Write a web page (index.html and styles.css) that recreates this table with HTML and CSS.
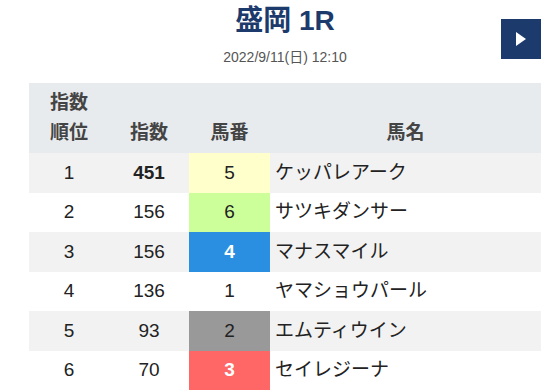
FILE: index.html
```html
<!DOCTYPE html>
<html lang="ja">
<head>
<meta charset="utf-8">
<link rel="stylesheet" href="styles.css">
</head>
<body>
<div class="page">
  <header class="race-head">
    <div class="spacer"></div>
    <div class="titles">
      <h1 class="race-title">盛岡 1R</h1>
      <div class="race-date">2022/9/11(日) 12:10</div>
    </div>
    <a class="next-btn" href="#" aria-label="次へ">
      <svg width="12" height="16" viewBox="0 0 12 16"><polygon points="1,1 11,8 1,15" fill="#fff"/></svg>
    </a>
  </header>
  <table class="idx-table">
    <thead>
      <tr>
        <th class="c-rank">指数<br>順位</th>
        <th class="c-idx">指数</th>
        <th class="c-num">馬番</th>
        <th class="c-name">馬名</th>
      </tr>
    </thead>
    <tbody>
      <tr><td>1</td><td class="top">451</td><td class="waku1">5</td><td class="name">ケッパレアーク</td></tr>
      <tr><td>2</td><td>156</td><td class="waku2">6</td><td class="name">サツキダンサー</td></tr>
      <tr><td>3</td><td>156</td><td class="waku3">4</td><td class="name">マナスマイル</td></tr>
      <tr><td>4</td><td>136</td><td>1</td><td class="name">ヤマショウパール</td></tr>
      <tr><td>5</td><td>93</td><td class="waku5">2</td><td class="name">エムティウイン</td></tr>
      <tr><td>6</td><td>70</td><td class="waku6">3</td><td class="name">セイレジーナ</td></tr>
    </tbody>
  </table>
</div>
</body>
</html>
```
FILE: styles.css
```css
html, body {
  margin: 0;
  padding: 0;
  background: #fff;
}
body {
  font-family: "Liberation Sans", "Noto Sans CJK JP", sans-serif;
  color: #222;
}
.page {
  width: 512px;
  margin-left: 29px;
  padding-top: 4px;
}
.race-head {
  display: grid;
  grid-template-columns: 1fr auto 1fr;
  align-items: start;
}
.titles {
  text-align: center;
}
.race-title {
  margin: 0;
  font-size: 28px;
  line-height: 34px;
  font-weight: bold;
  color: #1d3a6d;
}
.race-date {
  margin-top: 10px;
  font-size: 14px;
  line-height: 18px;
  color: #555;
}
.next-btn {
  justify-self: end;
  margin-top: 15px;
  width: 40px;
  height: 40px;
  background: #1d3a6d;
  display: flex;
  align-items: center;
  justify-content: center;
}
.idx-table {
  margin-top: 17px;
  width: 512px;
  border-collapse: collapse;
  table-layout: fixed;
  font-size: 19px;
}
.idx-table th {
  background: #e8ebee;
  color: #444;
  font-weight: bold;
  line-height: 30px;
  padding: 5px 0;
  vertical-align: bottom;
  text-align: center;
}
.idx-table th.c-rank { width: 80px; }
.idx-table th.c-idx { width: 80px; }
.idx-table th.c-num { width: 81px; }
.idx-table td {
  height: 39.5px;
  padding: 0;
  text-align: center;
  line-height: 22px;
}
.idx-table tbody tr:nth-child(odd) {
  background: #f2f2f2;
}
.idx-table td.name {
  text-align: left;
  padding-left: 5px;
}
.idx-table td.top {
  font-weight: bold;
}
.waku1 { background: #ffffcc; }
.waku2 { background: #ccff99; }
.waku3 { background: #2a8fe0; color: #fff; font-weight: bold; }
.waku5 { background: #999999; }
.waku6 { background: #ff6666; color: #fff; font-weight: bold; }
```
